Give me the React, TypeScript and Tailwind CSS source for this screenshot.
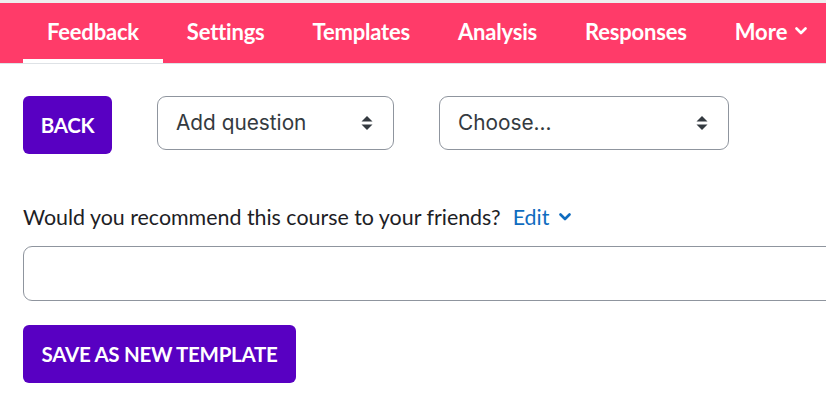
import React from 'react';

const navItems = ['Feedback', 'Settings', 'Templates', 'Analysis', 'Responses'];

const SortIcon: React.FC = () => (
  <svg width="12" height="14" viewBox="0 0 12 14" className="shrink-0">
    <path d="M6 0 L11.5 5.5 H0.5 Z" fill="#343a40" />
    <path d="M6 14 L11.5 8.5 H0.5 Z" fill="#343a40" />
  </svg>
);

const Chevron: React.FC<{ color: string }> = ({ color }) => (
  <svg width="12" height="8" viewBox="0 0 12 8">
    <path d="M1.5 1.5 L6 6 L10.5 1.5" fill="none" stroke={color} strokeWidth="2.6" strokeLinecap="round" strokeLinejoin="round" />
  </svg>
);

const App: React.FC = () => {
  return (
    <div className="w-[826px] h-[401px] overflow-hidden bg-white" style={{ fontFamily: '"Lato", "Liberation Sans", sans-serif' }}>
      <div className="h-[3px] bg-[#eeeeee]" />

      {/* Nav bar */}
      <nav className="h-[61px] bg-[#ff3b69] border-b border-[#dee2e6] flex pl-[23px]">
        {navItems.map((item, i) => (
          <div
            key={item}
            className={
              'h-[60px] px-[24px] flex items-center text-white font-bold text-[22px] tracking-[-0.2px] border-b-4 ' +
              (i === 0 ? 'border-white' : 'border-transparent')
            }
          >
            <span>{item}</span>
          </div>
        ))}
        <div className="h-[60px] px-[24px] flex items-center gap-[8px] text-white font-bold text-[22px] border-b-4 border-transparent">
          <span>More</span>
          <Chevron color="#ffffff" />
        </div>
      </nav>

      {/* Content */}
      <div className="pl-[23px] pt-[32px]">
        <div className="flex items-start">
          <button className="w-[89px] h-[58px] rounded-[6px] bg-[#5800c2] text-white font-bold text-[20.5px] tracking-[-0.3px]">
            BACK
          </button>
          <div className="ml-[45px] w-[237px] h-[54px] rounded-[9px] border border-[#8f959e] flex items-center justify-between pl-[18px] pr-[20px] text-[20.8px] text-[#343a40]" style={{ fontFamily: '"Inter", "Liberation Sans", sans-serif' }}>
            <span>Add question</span>
            <SortIcon />
          </div>
          <div className="ml-[45px] w-[290px] h-[54px] rounded-[9px] border border-[#8f959e] flex items-center justify-between pl-[18px] pr-[20px] text-[20.8px] text-[#343a40]" style={{ fontFamily: '"Inter", "Liberation Sans", sans-serif' }}>
            <span>Choose...</span>
            <SortIcon />
          </div>
        </div>

        <div className="mt-[50px] flex items-center text-[21.4px] text-[#1d2125] h-[26px]">
          <span>Would you recommend this course to your friends?</span>
          <span className="ml-[12px] text-[#0f6cbf]">Edit</span>
          <span className="ml-[10px] flex items-center">
            <Chevron color="#0f6cbf" />
          </span>
        </div>

        <div className="mt-[16px] w-[830px] h-[55px] rounded-[9px] border border-[#8f959e]" />

        <button className="mt-[24px] w-[273px] h-[58px] rounded-[6px] bg-[#5800c2] text-white font-bold text-[20.5px] tracking-[-0.3px]">
          SAVE AS NEW TEMPLATE
        </button>
      </div>
    </div>
  );
};

export default App;
